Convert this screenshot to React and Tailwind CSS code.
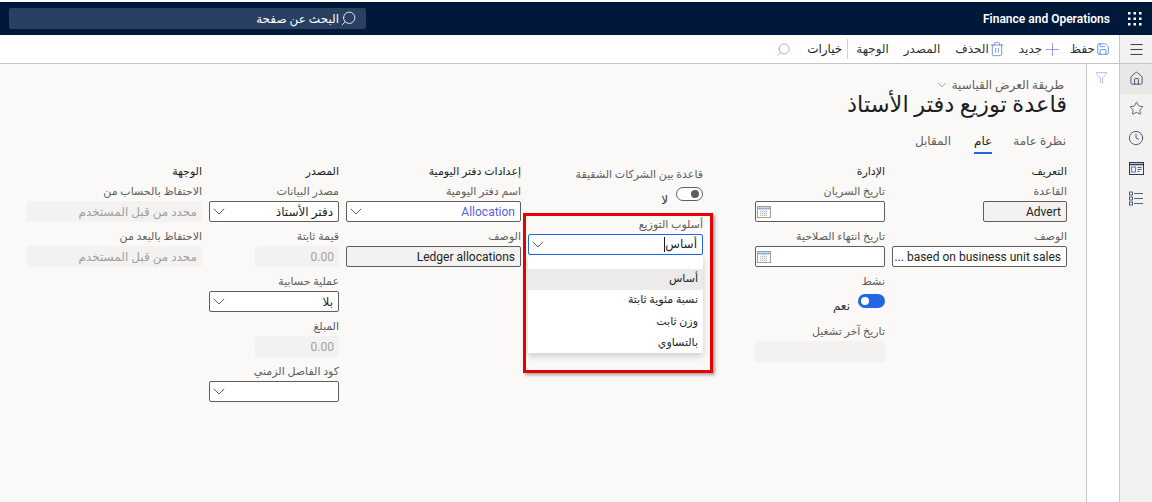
import { ChevronDown, Clock, Funnel, House, Menu, Plus, Save, Search, Star, Trash2 } from "lucide-react";

const FONT = "font-['Roboto','DejaVu_Sans',sans-serif]";

function Label({ children }) {
  return (
    <div className="flex h-[24px] items-end text-[11px] leading-[18px] whitespace-nowrap text-[#605e5c]">
      <span>{children}</span>
    </div>
  );
}

function Heading({ children }) {
  return <div className="h-[14px] text-[11px] leading-[18px] font-medium whitespace-nowrap text-[#201f1e]">{children}</div>;
}

function Box({ children, className = "" }) {
  return (
    <div className={`flex h-[21px] items-center overflow-hidden rounded-[2px] border border-[#605e5c] pr-[5px] text-[12px] whitespace-nowrap text-[#201f1e] ${className}`}>
      {children}
    </div>
  );
}

function Disabled({ children }) {
  return (
    <div className="flex h-[21px] items-center rounded-[2px] bg-[#f3f2f1] pr-[5px] text-[12px] whitespace-nowrap text-[#a19f9d]">
      {children}
    </div>
  );
}

function Chevron() {
  return (
    <svg width="12" height="7" viewBox="0 0 12 7" className="ml-[3px] shrink-0" fill="none" stroke="#605e5c">
      <path d="M0.8 0.8 6 6 11.2 0.8" />
    </svg>
  );
}

function SelectBox({ children }) {
  return (
    <Box className="justify-between bg-white">
      <span>{children}</span>
      <Chevron />
    </Box>
  );
}

function DateBox() {
  return (
    <Box className="justify-end bg-white">
      <svg width="14" height="13" viewBox="0 0 14 13" className="ml-[1px]" fill="none" stroke="#a19f9d">
        <rect x="0.5" y="1.5" width="13" height="11" />
        <path d="M0.5 3.5h13" stroke="#8fb2d8" strokeWidth="2" />
        <path d="M3 6.5h8M3 8.5h8M3 10.5h8M5 5.5v6M7 5.5v6M9 5.5v6" strokeWidth="0.7" strokeDasharray="1 1" />
      </svg>
    </Box>
  );
}

function Toggle({ on }) {
  if (on) {
    return (
      <span className="flex h-[14px] w-[27px] items-center justify-end rounded-full bg-[#2266e3] px-[3px]">
        <span className="h-[8px] w-[8px] rounded-full bg-white" />
      </span>
    );
  }
  return (
    <span className="flex h-[14px] w-[27px] items-center justify-start rounded-full border border-[#605e5c] bg-white px-[3px]">
      <span className="h-[8px] w-[8px] rounded-full bg-[#605e5c]" />
    </span>
  );
}

function GridIcon() {
  return (
    <svg width="14" height="14" viewBox="0 0 14 14" fill="white">
      {[0, 5.5, 11].map((y) =>
        [0, 5.5, 11].map((x) => <rect key={`${x}-${y}`} x={x} y={y} width="2.5" height="2.5" />)
      )}
    </svg>
  );
}

function RailButton({ children, active }) {
  return <div className={`flex h-[30px] items-center justify-center pb-[2px] ${active ? "bg-[#e9e8e7]" : ""}`}>{children}</div>;
}

export default function App() {
  return (
    <div dir="rtl" className={`flex h-screen flex-col overflow-hidden bg-white pt-[2px] ${FONT}`}>
      <header className="flex h-[33px] shrink-0 items-center justify-between bg-[#001839] pl-[9px]">
        <div className="flex items-center">
          <div className="flex w-[41px] justify-start pr-[10px]">
            <GridIcon />
          </div>
          <span className="mr-[1px] text-[12px] font-semibold text-white" dir="ltr">Finance and Operations</span>
        </div>
        <div className="flex h-[21px] w-[357px] items-center gap-[1px] rounded-[2px] bg-[#2a4063] pr-[9px] text-[12px] text-white">
          <Search size={17} strokeWidth={1.2} className="-scale-x-100" />
          <span>البحث عن صفحة</span>
        </div>
      </header>

      <div className="flex h-[29px] shrink-0 items-center border-b border-[#c8c6c4] text-[12px] text-[#323130]">
        <div className="flex h-full w-[33px] items-center justify-center border-l border-[#c8c6c4] bg-[#f3f2f1]">
          <Menu size={17} strokeWidth={1.2} className="text-[#201f1e]" />
        </div>
        <div className="mr-[9px] flex items-center gap-[1px]">
          <Save size={14} strokeWidth={1.3} className="text-[#3f6fe0]" />
          <span>حفظ</span>
        </div>
        <div className="mr-[7px] flex items-center">
          <Plus size={21} strokeWidth={1.1} className="text-[#9a97ea]" />
          <span>جديد</span>
        </div>
        <div className="mr-[14px] flex items-center">
          <Trash2 size={16} strokeWidth={1.1} className="text-[#4f6fd8]" />
          <span>الحذف</span>
        </div>
        <span className="mr-[15px]">المصدر</span>
        <span className="mr-[15px]">الوجهة</span>
        <span className="mr-[8px] h-[20px] border-r border-[#d2d0ce]" />
        <span className="mr-[5px] text-[#201f1e]">خيارات</span>
        <Search size={15} strokeWidth={1.2} className="mr-[16px] -scale-x-100 text-[#a08ae6]" />
      </div>

      <div className="flex min-h-0 flex-1">
        <nav className="flex w-[33px] shrink-0 flex-col border-l border-[#c8c6c4] bg-[#f3f2f1] text-[#2a3a5a]">
          <RailButton active><House size={15} strokeWidth={1.3} /></RailButton>
          <RailButton><Star size={15} strokeWidth={1.2} /></RailButton>
          <RailButton><Clock size={16} strokeWidth={1.2} /></RailButton>
          <RailButton>
            <svg width="15" height="13" viewBox="0 0 15 13" fill="none" stroke="currentColor">
              <rect x="0.5" y="0.5" width="14" height="12" />
              <path d="M0.5 2.5h14" strokeWidth="1.5" />
              <rect x="2.5" y="5" width="4" height="5" stroke="#4f80c8" />
              <path d="M8.5 5.5h4M8.5 7.5h4M8.5 9.5h2" strokeWidth="0.8" />
            </svg>
          </RailButton>
          <RailButton>
            <svg width="15" height="15" viewBox="0 0 15 15" fill="none" stroke="currentColor" strokeWidth="0.8">
              <rect x="0.5" y="1" width="3" height="3" />
              <rect x="0.5" y="6" width="3" height="3" />
              <rect x="0.5" y="11" width="3" height="3" />
              <path d="M5 2.5h9M5 7.5h9M5 12.5h9" />
            </svg>
          </RailButton>
        </nav>

        <div className="w-[33px] shrink-0 border-l border-[#c8c6c4] bg-white pt-[7px]">
          <Funnel size={13} strokeWidth={1} className="mr-[11px] text-[#7f7df0]" />
        </div>

        <main className="min-w-0 flex-1 bg-[#faf9f8] pt-[14px] pr-[19px]">
          <div className="flex h-[13px] items-center gap-[3px] pr-[3px] text-[12px] text-[#605e5c]">
            <span>طريقة العرض القياسية</span>
            <ChevronDown size={14} strokeWidth={1} />
          </div>
          <h1 className="h-[26px] text-[22.5px] leading-[26px] whitespace-nowrap text-[#201f1e]">قاعدة توزيع دفتر الأستاذ</h1>

          <div className="mt-[14px] flex h-[20px] items-center pr-[1px] text-[12px] text-[#605e5c]">
            <span>نظرة عامة</span>
            <span className="relative mr-[21px] font-medium text-[#201f1e]">
              عام
              <span className="absolute right-0 left-0 -bottom-[4px] h-[2px] bg-[#2266e3]" />
            </span>
            <span className="mr-[23px]">المقابل</span>
          </div>

          <div className="mt-[12px] flex">
            <section className="w-[175px]">
              <Heading>التعريف</Heading>
              <Label>القاعدة</Label>
              <div className="flex justify-start">
                <Box className="w-[84px] bg-[#f3f2f1]">Advert</Box>
              </div>
              <Label>الوصف</Label>
              <Box className="bg-white">based on business unit sales ...</Box>
            </section>

            <section className="mr-[7px] w-[130px]">
              <Heading>الإدارة</Heading>
              <Label>تاريخ السريان</Label>
              <DateBox />
              <Label>تاريخ انتهاء الصلاحية</Label>
              <DateBox />
              <Label>نشط</Label>
              <div className="mt-[3px] flex h-[14px] items-start gap-[8px] text-[12px] text-[#323130]">
                <Toggle on />
                <span className="leading-[24px]">نعم</span>
              </div>
              <div className="mt-[9px]">
                <Label>تاريخ آخر تشغيل</Label>
              </div>
              <Disabled />
            </section>

            <section className="relative mr-[52px] w-[175px] pt-[3px]">
              <div className="h-[18px] text-[11px] leading-[18px] whitespace-nowrap text-[#605e5c]">قاعدة بين الشركات الشقيقة</div>
              <div className="mt-[3px] flex h-[14px] items-start gap-[8px] text-[12px] text-[#323130]">
                <Toggle />
                <span className="leading-[26px]">لا</span>
              </div>
              <div className="mt-[9px]">
                <Label>أسلوب التوزيع</Label>
              </div>
              <div className="flex h-[21px] items-center justify-between rounded-[2px] border border-[#2266e3] bg-white pr-[5px] text-[12px] text-[#201f1e]">
                <span className="border-l border-[#201f1e] leading-[15px]">أساس</span>
                <Chevron />
              </div>
              <div className="absolute top-[92px] right-0 left-0 h-[98px] bg-white pt-[14px] text-[11px] text-[#201f1e] shadow-[0_3px_7px_rgba(0,0,0,0.18)]">
                <div className="flex h-[21px] items-center bg-[#edebe9] pr-[5px]">أساس</div>
                <div className="flex h-[21px] items-center pr-[5px]">نسبة مئوية ثابتة</div>
                <div className="flex h-[22px] items-center pr-[5px]">وزن ثابت</div>
                <div className="flex h-[21px] items-center pr-[5px]">بالتساوي</div>
              </div>
              <div className="pointer-events-none absolute top-[50px] -right-[10px] h-[160px] w-[190px] border-[3px] border-[#e60000] shadow-[2px_2px_3px_rgba(0,0,0,0.35)]" />
            </section>

            <section className="mr-[7px] w-[175px]">
              <Heading>إعدادات دفتر اليومية</Heading>
              <Label>اسم دفتر اليومية</Label>
              <SelectBox><span className="text-[#5a5fe0]">Allocation</span></SelectBox>
              <Label>الوصف</Label>
              <Box className="bg-[#f3f2f1]">Ledger allocations</Box>
            </section>

            <section className="mr-[7px] w-[130px]">
              <Heading>المصدر</Heading>
              <Label>مصدر البيانات</Label>
              <SelectBox>دفتر الأستاذ</SelectBox>
              <Label>قيمة ثابتة</Label>
              <div className="w-[84px]">
                <Disabled>0.00</Disabled>
              </div>
              <Label>عملية حسابية</Label>
              <SelectBox>بلا</SelectBox>
              <Label>المبلغ</Label>
              <div className="w-[84px]">
                <Disabled>0.00</Disabled>
              </div>
              <Label>كود الفاصل الزمني</Label>
              <SelectBox />
            </section>

            <section className="mr-[7px] w-[175px]">
              <Heading>الوجهة</Heading>
              <Label>الاحتفاظ بالحساب من</Label>
              <Disabled>محدد من قبل المستخدم</Disabled>
              <Label>الاحتفاظ بالبعد من</Label>
              <Disabled>محدد من قبل المستخدم</Disabled>
            </section>
          </div>
        </main>
      </div>
    </div>
  );
}
